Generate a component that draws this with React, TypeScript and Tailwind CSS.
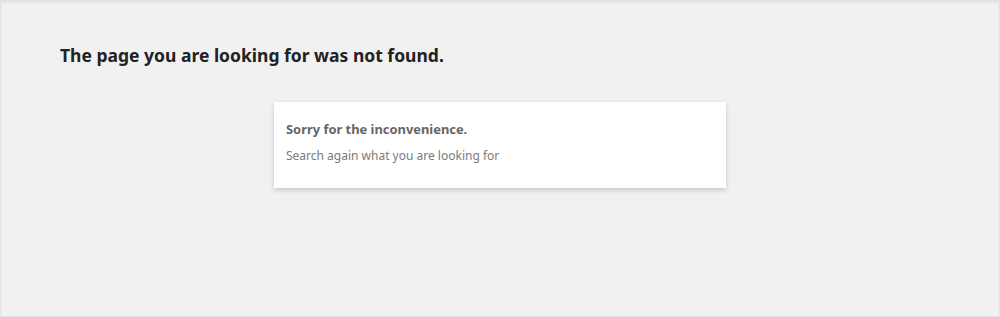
export default function App() {
  return (
    <main
      className="h-[317px] w-full border border-t-0 border-[#e2e2e2] bg-[#f1f1f1] shadow-[inset_0_3px_4px_-2px_rgba(0,0,0,0.12)]"
      style={{ fontFamily: '"Noto Sans", "Open Sans", sans-serif' }}
    >
      <div className="px-[59px] pt-[42px]">
        <h1 className="text-[17.5px] font-bold leading-[26px] text-[#222]">
          The page you are looking for was not found.
        </h1>
      </div>

      <div className="mt-[34px] flex justify-center">
        <div className="h-[86px] w-[452px] bg-white px-3 pt-[18px] shadow-[0_2px_5px_rgba(0,0,0,0.18)]">
          <p className="text-[12.9px] font-bold leading-[18px] text-[#666]">
            Sorry for the inconvenience.
          </p>
          <p className="mt-[9px] text-[12px] leading-[18px] text-[#7a7a7a]">
            Search again what you are looking for
          </p>
        </div>
      </div>
    </main>
  );
}
